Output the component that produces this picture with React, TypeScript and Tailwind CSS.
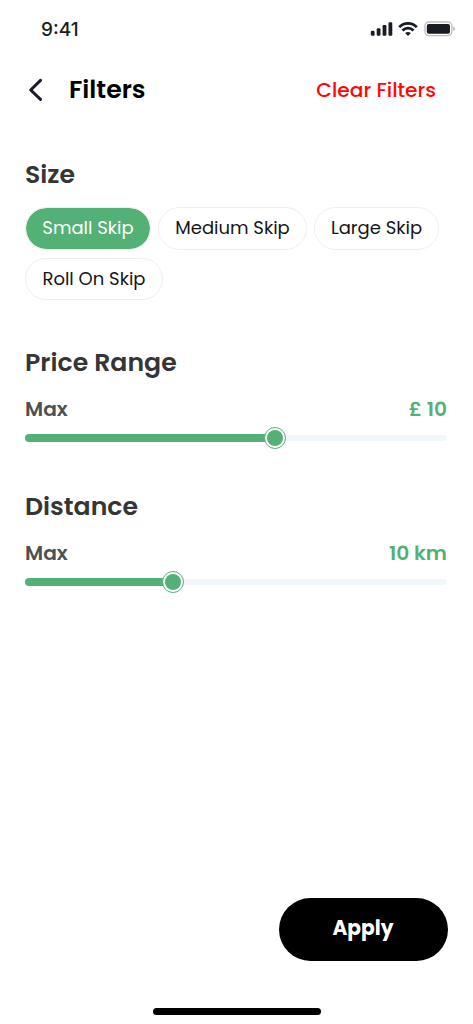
import { useState } from "react";

const SIZES = [
    { label: "Small Skip", width: "w-[126px]" },
    { label: "Medium Skip", width: "w-[149px]" },
    { label: "Large Skip", width: "w-[125px]" },
    { label: "Roll On Skip", width: "w-[138px]" },
];

function StatusBar() {
    return (
        <div className="h-[58px] flex items-center justify-between pl-[41px] pr-[17px]">
            <span className="text-[19px] leading-none font-medium text-[#1b1d22] font-['Inter',sans-serif]">9:41</span>
            <div className="flex items-center">
                {/* Signal */}
                <svg width="23" height="16" viewBox="0 0 23 16" fill="#191c22">
                    <rect x="0.8" y="9.8" width="3.8" height="5" rx="1.2" />
                    <rect x="6.7" y="7.2" width="3.8" height="7.6" rx="1.2" />
                    <rect x="12.6" y="4.1" width="3.8" height="10.7" rx="1.2" />
                    <rect x="18.5" y="1.2" width="3.8" height="13.6" rx="1.2" />
                </svg>
                {/* Wifi */}
                <svg className="ml-[5px]" width="20" height="16" viewBox="0 0 20 16" fill="none" stroke="#191c22" strokeWidth="2.7">
                    <path d="M1.2 6.1C6 1 14 1 18.8 6.1" />
                    <path d="M4.4 9.5C7.6 6.3 12.4 6.3 15.6 9.5" />
                    <path d="M7.1 12.1Q10 9.7 12.9 12.1L10 15Z" fill="#191c22" stroke="none" />
                </svg>
                {/* Battery */}
                <svg className="ml-[6px]" width="32" height="16" viewBox="0 0 32 16">
                    <rect x="0.9" y="1" width="27" height="13.6" rx="4" fill="none" stroke="#bfc0c2" strokeWidth="1.4" />
                    <rect x="2.8" y="2.9" width="23.2" height="9.8" rx="2" fill="#191c22" />
                    <path d="M29.3 5.5C31.4 6.3 31.4 9.3 29.3 10.1Z" fill="#b5b6b8" />
                </svg>
            </div>
        </div>
    );
}

function Slider({ title, value, percent }: { title: string; value: string; percent: number }) {
    return (
        <section className="h-[144px]">
            <h2 className="h-[39px] flex items-center text-[25.2px] font-semibold text-[#353535]">{title}</h2>
            <div className="mt-[8px] h-[38px] flex items-center justify-between text-[20.2px] font-semibold">
                <span className="text-[#505050]">Max</span>
                <span className="text-[#54b175]">{value}</span>
            </div>
            <div className="relative h-[23px] -mt-[2px] flex items-center">
                <div className="w-full h-[6px] rounded-full bg-[#f3f7f9]" />
                <div
                    className="absolute left-0 top-[7.5px] h-[8px] rounded-full bg-[#54b175]"
                    style={{ width: `${percent}%` }}
                />
                <div
                    className="absolute top-[0.5px] size-[22px] -translate-x-1/2 rounded-full border border-[#54b175] bg-white flex items-center justify-center"
                    style={{ left: `${percent}%` }}
                >
                    <div className="size-[16px] rounded-full bg-[#54b175]" />
                </div>
            </div>
        </section>
    );
}

export default function App() {
    const [selected, setSelected] = useState("Small Skip");

    return (
        <div className="w-[473px] h-[1024px] bg-white flex flex-col overflow-hidden font-['Poppins','Inter',sans-serif]">
            <StatusBar />

            <header className="h-[64px] flex items-center pl-[28px] pr-[37px]">
                <svg width="15" height="24" viewBox="0 0 15 24" fill="none" stroke="#1d1829" strokeWidth="3" strokeLinecap="round" strokeLinejoin="round">
                    <path d="M12.5 2.4L2.7 12L12.5 21.4" />
                </svg>
                <h1 className="ml-[26px] text-[25.2px] font-semibold text-black">Filters</h1>
                <button className="ml-auto text-[20.2px] font-medium text-[#ff0505]">Clear Filters</button>
            </header>

            <main className="pl-[25px] pr-[26px]">
                <h2 className="mt-[33px] h-[39px] flex items-center text-[25.2px] font-semibold text-[#353535]">Size</h2>
                <div className="mt-[13px] flex flex-wrap gap-x-[7px] gap-y-[8px] -mr-[4px]">
                    {SIZES.map((size) => (
                        <button
                            key={size.label}
                            onClick={() => setSelected(size.label)}
                            className={`h-[42.5px] pb-[1.5px] rounded-full border border-[#efefef] bg-clip-padding text-[18px] whitespace-nowrap ${size.width} ${
                                selected === size.label ? "bg-[#54b175] text-white" : "bg-white text-[#151515]"
                            }`}
                        >
                            {size.label}
                        </button>
                    ))}
                </div>

                <div className="mt-[43px]">
                    <Slider title="Price Range" value="£ 10" percent={59.2} />
                    <Slider title="Distance" value="10 km" percent={35} />
                </div>
            </main>

            <footer className="mt-auto flex flex-col">
                <button className="mr-[25px] self-end w-[169px] h-[63px] pr-[1px] pb-[2px] rounded-full bg-black text-[20.2px] font-bold text-white">
                    Apply
                </button>
                <div className="mt-[47px] mb-[9px] self-center w-[168px] h-[7px] rounded-full bg-black" />
            </footer>
        </div>
    );
}
